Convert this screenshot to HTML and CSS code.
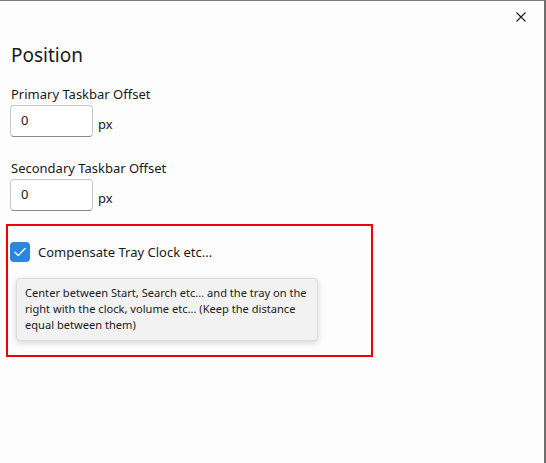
FILE: index.html
```html
<!DOCTYPE html>
<html>
<head>
<meta charset="utf-8">
<link rel="stylesheet" href="styles.css">
</head>
<body>
<div class="window">
  <div class="titlebar">
    <button class="close" aria-label="Close">
      <svg width="10" height="10" viewBox="0 0 10 10"><path d="M0.5 0.5 L9.5 9.5 M9.5 0.5 L0.5 9.5" stroke="#1a1a1a" stroke-width="1.1" fill="none"/></svg>
    </button>
  </div>
  <div class="content">
    <h1 class="title">Position</h1>
    <div class="field">
      <label class="label">Primary Taskbar Offset</label>
      <div class="row">
        <div class="input">0</div>
        <span class="unit">px</span>
      </div>
    </div>
    <div class="field second">
      <label class="label">Secondary Taskbar Offset</label>
      <div class="row">
        <div class="input">0</div>
        <span class="unit">px</span>
      </div>
    </div>
    <div class="highlight">
      <div class="check-row">
        <span class="checkbox">
          <svg width="12" height="10" viewBox="0 0 12 10"><path d="M1 5.2 L4.3 8.4 L11 1.6" stroke="#fff" stroke-width="1.4" fill="none" stroke-linecap="round" stroke-linejoin="round"/></svg>
        </span>
        <span class="check-label">Compensate Tray Clock etc...</span>
      </div>
      <div class="tooltip">Center between Start, Search etc... and the tray on the right with the clock, volume etc... (Keep the distance equal between them)</div>
    </div>
  </div>
</div>
</body>
</html>
```
FILE: styles.css
```css
html, body {
  margin: 0;
  padding: 0;
  background: #fdfdfd;
}
body {
  font-family: "Noto Sans", "Open Sans", sans-serif;
  color: #1a1a1a;
}
.window {
  box-sizing: border-box;
  width: 546px;
  height: 463px;
  border-top: 1px solid #7a7a7a;
  border-right: 2px solid #6e6e6e;
  background: #fdfdfd;
}
.titlebar {
  height: 32px;
  display: flex;
  justify-content: flex-end;
}
.close {
  width: 46px;
  height: 31px;
  border: 0;
  background: transparent;
  padding: 0;
  display: flex;
  align-items: center;
  justify-content: center;
}
.content {
  padding: 0 0 0 10px;
}
.title {
  margin: 9px 0 0 1px;
  font-size: 19px;
  font-weight: 400;
  line-height: 26px;
}
.field {
  margin-top: 17px;
}
.field.second {
  margin-top: 22px;
}
.label {
  display: block;
  font-size: 13px;
  line-height: 18px;
  margin-left: 1px;
}
.row {
  display: flex;
  align-items: center;
  margin-top: 2px;
}
.input {
  box-sizing: border-box;
  width: 83px;
  height: 32px;
  border: 1px solid #c8c8c8;
  border-bottom-color: #8a8a8a;
  border-radius: 4px;
  background: #fff;
  font-size: 13px;
  line-height: 29px;
  padding-left: 10px;
}
.unit {
  font-size: 13px;
  margin-left: 5px;
  margin-top: 6px;
}
.highlight {
  box-sizing: border-box;
  width: 367px;
  height: 133px;
  margin: 13px 0 0 -4px;
  border: 2px solid #f00000;
  padding: 16px 0 0 2px;
}
.check-row {
  display: flex;
  align-items: center;
}
.checkbox {
  box-sizing: border-box;
  width: 20px;
  height: 20px;
  border-radius: 4px;
  background: #2b86e0;
  display: flex;
  align-items: center;
  justify-content: center;
}
.check-label {
  font-size: 13px;
  margin-left: 8px;
}
.tooltip {
  box-sizing: border-box;
  width: 302px;
  margin: 16px 0 0 6px;
  padding: 6px 6px 7px 8px;
  background: #f2f2f2;
  border: 1px solid #dcdcdc;
  border-radius: 4px;
  box-shadow: 0 2px 6px rgba(0,0,0,0.16);
  font-size: 11.1px;
  line-height: 16px;
}
```
